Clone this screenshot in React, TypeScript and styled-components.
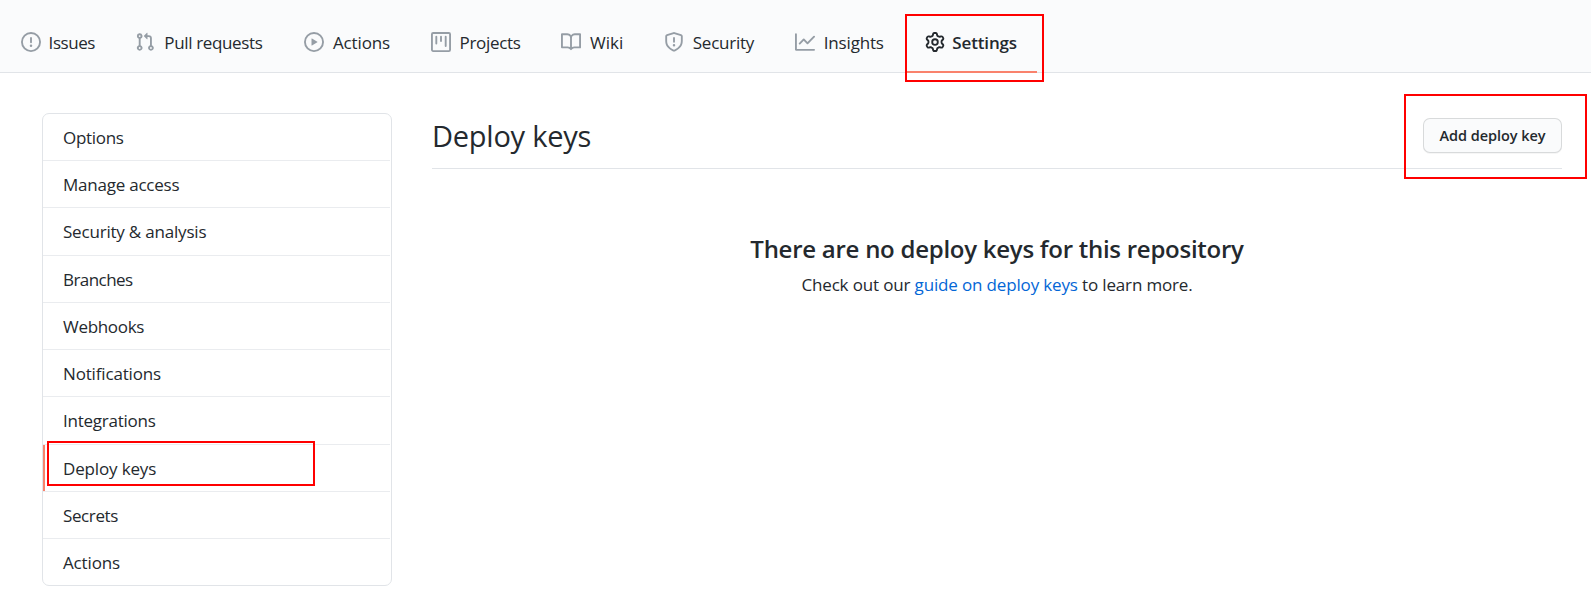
import React from 'react';
import styled, { createGlobalStyle, css } from 'styled-components';

const GlobalStyle = createGlobalStyle`
  *, *::before, *::after { box-sizing: border-box; }
  body {
    margin: 0;
    background: #fff;
    color: #24292e;
    font-family: "Open Sans", "Noto Sans", sans-serif;
    font-size: 17px;
    line-height: 25px;
  }
`;

const Page = styled.div`
  height: 594px;
  overflow: hidden;
`;

const RepoNav = styled.nav`
  display: flex;
  height: 73px;
  padding-left: 1px;
  background: #fafbfc;
  border-bottom: 1px solid #e1e4e8;
`;

const Tab = styled.a<{ $width: number; $selected?: boolean }>`
  position: relative;
  display: flex;
  flex: none;
  align-items: flex-start;
  width: ${p => p.$width}px;
  height: 73px;
  padding: 30px 0 0 20px;
  white-space: nowrap;
  border-bottom: 2px solid transparent;
  ${p => p.$selected && css`
    font-weight: 600;
    border-bottom-color: #f9826c;
  `}
`;

const TabIcon = styled.svg<{ $selected?: boolean }>`
  flex: none;
  width: 20px;
  height: 20px;
  margin-top: 2px;
  fill: ${p => (p.$selected ? '#24292e' : '#959da5')};
`;

const Label = styled.span<{ $tracking?: number; $gap?: number }>`
  margin-left: ${p => p.$gap ?? 0}px;
  letter-spacing: ${p => p.$tracking ?? 0}px;
`;

const Highlight = styled.span<{ $x: number; $y: number; $w: number; $h: number }>`
  position: absolute;
  left: ${p => p.$x}px;
  top: ${p => p.$y}px;
  width: ${p => p.$w}px;
  height: ${p => p.$h}px;
  border: 2px solid #f00;
  pointer-events: none;
  z-index: 1;
`;

const Content = styled.div`
  display: flex;
  align-items: flex-start;
  gap: 40px;
  padding: 40px 29px 0 42px;
`;

const Menu = styled.nav`
  flex: none;
  width: 350px;
  border: 1px solid #e1e4e8;
  border-radius: 7px;
`;

const MenuItem = styled.a<{ $height: number; $selected?: boolean }>`
  position: relative;
  display: block;
  height: ${p => p.$height}px;
  margin-right: 1px;
  padding: 11px 20px 0;
  border-bottom: 1px solid #eaecef;
  &:last-of-type { border-bottom: 0; }
  ${p => p.$selected && css`
    &::before {
      content: '';
      position: absolute;
      inset: 0 auto 0 0;
      width: 2px;
      background: #f9826c;
    }
  `}
`;

const Main = styled.main`
  flex: 1;
  min-width: 0;
`;

const Subhead = styled.header`
  position: relative;
  display: flex;
  justify-content: space-between;
  align-items: flex-start;
  height: 56px;
  border-bottom: 1px solid #e1e4e8;
`;

const Title = styled.h2`
  margin: 2px 0 0;
  font-size: 29px;
  font-weight: 400;
  line-height: 42px;
`;

const Button = styled.button`
  width: 139px;
  height: 35px;
  margin-top: 5px;
  padding: 0;
  color: #24292e;
  background: #fafbfc;
  border: 1px solid rgba(27, 31, 35, 0.15);
  border-radius: 7px;
  box-shadow: 0 1px 0 rgba(27, 31, 35, 0.04);
  font: 600 14.5px/20px "Open Sans", sans-serif;
  white-space: nowrap;
`;

const Blankslate = styled.section`
  padding-top: 61px;
  text-align: center;
`;

const BlankTitle = styled.h3`
  margin: 0;
  font-size: 24px;
  font-weight: 600;
  line-height: 37px;
`;

const BlankText = styled.p`
  margin: 5px 0 0;
`;

const Link = styled.a`
  color: #0366d6;
`;

interface TabData {
  label: string;
  width: number;
  gap: number;
  tracking: number;
  selected?: boolean;
  path: string;
}

const tabs: TabData[] = [
  { label: 'Issues', width: 114, gap: 7.6, tracking: -0.45, path: 'M8 1.5a6.5 6.5 0 100 13 6.5 6.5 0 000-13zM0 8a8 8 0 1116 0A8 8 0 010 8zm9 3a1 1 0 11-2 0 1 1 0 012 0zm-.25-6.25a.75.75 0 00-1.5 0v3.5a.75.75 0 001.5 0v-3.5z' },
  { label: 'Pull requests', width: 169, gap: 9.3, tracking: -0.35, path: 'M7.177 3.073L9.573.677A.25.25 0 0110 .854v4.792a.25.25 0 01-.427.177L7.177 3.427a.25.25 0 010-.354zM3.75 2.5a.75.75 0 100 1.5.75.75 0 000-1.5zm-2.25.75a2.25 2.25 0 113 2.122v5.256a2.251 2.251 0 11-1.5 0V5.372A2.25 2.25 0 011.5 3.25zM11 2.5h-1V4h1a1 1 0 011 1v5.628a2.251 2.251 0 101.5 0V5A2.5 2.5 0 0011 2.5zm1 10.25a.75.75 0 111.5 0 .75.75 0 01-1.5 0zM3.75 12a.75.75 0 100 1.5.75.75 0 000-1.5z' },
  { label: 'Actions', width: 127, gap: 9, tracking: -0.15, path: 'M1.5 8a6.5 6.5 0 1113 0 6.5 6.5 0 01-13 0zM8 0a8 8 0 100 16A8 8 0 008 0zM6.379 5.227A.25.25 0 006 5.442v5.117a.25.25 0 00.379.214l4.264-2.559a.25.25 0 000-.428L6.379 5.227z' },
  { label: 'Projects', width: 130, gap: 8.5, tracking: -0.32, path: 'M1.75 0A1.75 1.75 0 000 1.75v12.5C0 15.216.784 16 1.75 16h12.5A1.75 1.75 0 0016 14.25V1.75A1.75 1.75 0 0014.25 0H1.75zM1.5 1.75a.25.25 0 01.25-.25h12.5a.25.25 0 01.25.25v12.5a.25.25 0 01-.25.25H1.75a.25.25 0 01-.25-.25V1.75zM11.75 3a.75.75 0 00-.75.75v7.5a.75.75 0 001.5 0v-7.5a.75.75 0 00-.75-.75zm-8.25.75a.75.75 0 011.5 0v5.5a.75.75 0 01-1.5 0v-5.5zM8 3a.75.75 0 00-.75.75v3.5a.75.75 0 001.5 0v-3.5A.75.75 0 008 3z' },
  { label: 'Wiki', width: 103, gap: 9, tracking: 0, path: 'M0 1.75A.75.75 0 01.75 1h4.253c1.227 0 2.317.59 3 1.501A3.744 3.744 0 0111.006 1h4.245a.75.75 0 01.75.75v10.5a.75.75 0 01-.75.75h-4.507a2.25 2.25 0 00-1.591.659l-.622.621a.75.75 0 01-1.06 0l-.622-.621A2.25 2.25 0 005.258 13H.75a.75.75 0 01-.75-.75V1.75zm8.755 3a2.25 2.25 0 012.25-2.25H14.5v9h-3.757c-.71 0-1.4.201-1.992.572l.004-7.322zm-1.504 7.324l.004-5.073-.002-2.253A2.25 2.25 0 005.003 2.5H1.5v9h3.757a3.75 3.75 0 011.994.574z' },
  { label: 'Security', width: 131, gap: 8.8, tracking: -0.25, path: 'M7.467.133a1.75 1.75 0 011.066 0l5.25 1.68A1.75 1.75 0 0115 3.48V7c0 1.566-.32 3.182-1.303 4.682-.983 1.498-2.585 2.813-5.032 3.855a1.7 1.7 0 01-1.33 0c-2.447-1.042-4.049-2.357-5.032-3.855C1.32 10.182 1 8.566 1 7V3.48a1.75 1.75 0 011.217-1.667l5.25-1.68zm.61 1.429a.25.25 0 00-.153 0l-5.25 1.68a.25.25 0 00-.174.238V7c0 1.358.275 2.666 1.057 3.86.784 1.194 2.121 2.34 4.366 3.297a.2.2 0 00.154 0c2.245-.956 3.582-2.104 4.366-3.298C13.225 9.666 13.5 8.36 13.5 7V3.48a.25.25 0 00-.174-.237l-5.25-1.68zM9 10.5a1 1 0 11-2 0 1 1 0 012 0zm-.25-5.75a.75.75 0 10-1.5 0v3a.75.75 0 001.5 0v-3z' },
  { label: 'Insights', width: 130, gap: 8.8, tracking: -0.18, path: 'M1.5 1.75a.75.75 0 00-1.5 0v12.5c0 .414.336.75.75.75h14.5a.75.75 0 000-1.5H1.5V1.75zm14.28 2.53a.75.75 0 00-1.06-1.06L10 7.94 7.53 5.47a.75.75 0 00-1.06 0L3.22 8.72a.75.75 0 001.06 1.06L7 7.06l2.47 2.47a.75.75 0 001.06 0l5.25-5.25z' },
  { label: 'Settings', width: 132, gap: 7.3, tracking: -0.15, selected: true, path: 'M7.429 1.525a6.593 6.593 0 011.142 0c.036.003.108.036.137.146l.289 1.105c.147.56.55.967.997 1.189.174.086.341.183.501.29.417.278.97.423 1.53.27l1.102-.303c.11-.03.175.016.195.046.219.31.41.641.573.989.014.031.022.11-.059.19l-.815.806c-.411.406-.562.957-.53 1.456a4.588 4.588 0 010 .582c-.032.499.119 1.05.53 1.456l.815.806c.08.08.073.159.059.19a6.494 6.494 0 01-.573.99c-.02.029-.086.074-.195.045l-1.103-.303c-.559-.153-1.112-.008-1.529.27-.16.107-.327.204-.5.29-.449.222-.851.628-.998 1.189l-.289 1.105c-.029.11-.101.143-.137.146a6.613 6.613 0 01-1.142 0c-.036-.003-.108-.037-.137-.146l-.289-1.105c-.147-.56-.55-.967-.997-1.189a4.502 4.502 0 01-.501-.29c-.417-.278-.97-.423-1.53-.27l-1.102.303c-.11.03-.175-.016-.195-.046a6.492 6.492 0 01-.573-.989c-.014-.031-.022-.11.059-.19l.815-.806c.411-.406.562-.957.53-1.456a4.587 4.587 0 010-.582c.032-.499-.119-1.05-.53-1.456l-.815-.806c-.08-.08-.073-.159-.059-.19a6.44 6.44 0 01.573-.99c.02-.029.086-.075.195-.045l1.103.303c.559.153 1.112.008 1.529-.27.16-.107.327-.204.5-.29.449-.222.851-.628.998-1.189l.289-1.105c.029-.11.101-.143.137-.146zM8 0c-.236 0-.47.01-.701.03-.743.065-1.29.615-1.458 1.261l-.29 1.106c-.017.066-.078.158-.211.224a5.994 5.994 0 00-.668.386c-.123.082-.233.09-.3.071L3.27 2.776c-.644-.177-1.392.02-1.82.63a7.977 7.977 0 00-.704 1.217c-.315.675-.111 1.422.363 1.891l.815.806c.05.048.098.147.088.294a6.084 6.084 0 000 .772c.01.147-.038.246-.088.294l-.815.806c-.474.469-.678 1.216-.363 1.891.2.428.436.835.704 1.218.428.609 1.176.806 1.82.63l1.103-.303c.066-.019.176-.011.299.071.213.143.436.272.668.386.133.066.194.158.212.224l.289 1.106c.169.646.715 1.196 1.458 1.26a8.094 8.094 0 001.402 0c.743-.064 1.29-.614 1.458-1.26l.29-1.106c.017-.066.078-.158.211-.224a5.98 5.98 0 00.668-.386c.123-.082.233-.09.3-.071l1.102.302c.644.177 1.392-.02 1.82-.63.268-.382.505-.789.704-1.217.315-.675.111-1.422-.364-1.891l-.814-.806c-.05-.048-.098-.147-.088-.294a6.1 6.1 0 000-.772c-.01-.147.039-.246.088-.294l.814-.806c.475-.469.679-1.216.364-1.891a7.992 7.992 0 00-.704-1.218c-.428-.609-1.176-.806-1.82-.63l-1.103.303c-.066.019-.176.011-.299-.071a5.991 5.991 0 00-.668-.386c-.133-.066-.194-.158-.212-.224L10.16 1.29C9.99.645 9.444.095 8.701.031A8.094 8.094 0 008 0zm1.5 8a1.5 1.5 0 11-3 0 1.5 1.5 0 013 0zM11 8a3 3 0 11-6 0 3 3 0 016 0z' },
];

interface MenuData {
  label: string;
  height: number;
  tracking: number;
  selected?: boolean;
}

const menu: MenuData[] = [
  { label: 'Options', height: 47, tracking: -0.3 },
  { label: 'Manage access', height: 47, tracking: -0.23 },
  { label: 'Security & analysis', height: 48, tracking: -0.2 },
  { label: 'Branches', height: 47, tracking: -0.55 },
  { label: 'Webhooks', height: 47, tracking: -0.3 },
  { label: 'Notifications', height: 47, tracking: -0.16 },
  { label: 'Integrations', height: 48, tracking: -0.24 },
  { label: 'Deploy keys', height: 47, tracking: -0.15, selected: true },
  { label: 'Secrets', height: 47, tracking: -0.38 },
  { label: 'Actions', height: 46, tracking: -0.15 },
];

export default function App() {
  return (
    <Page>
      <GlobalStyle />
      <RepoNav>
        {tabs.map(t => (
          <Tab key={t.label} $width={t.width} $selected={t.selected}>
            <TabIcon viewBox="0 0 16 16" $selected={t.selected}>
              <path fillRule="evenodd" d={t.path} />
            </TabIcon>
            <Label $gap={t.gap} $tracking={t.tracking}>{t.label}</Label>
            {t.selected && <Highlight $x={0} $y={14} $w={139} $h={68} />}
          </Tab>
        ))}
      </RepoNav>
      <Content>
        <Menu>
          {menu.map(m => (
            <MenuItem key={m.label} $height={m.height} $selected={m.selected}>
              <Label $tracking={m.tracking}>{m.label}</Label>
              {m.selected && <Highlight $x={4} $y={-4} $w={268} $h={45} />}
            </MenuItem>
          ))}
        </Menu>
        <Main>
          <Subhead>
            <Title><Label $tracking={-0.25}>Deploy keys</Label></Title>
            <Button><Label $tracking={-0.05}>Add deploy key</Label></Button>
            <Highlight $x={972} $y={-19} $w={183} $h={85} />
          </Subhead>
          <Blankslate>
            <BlankTitle><Label $tracking={-0.26}>There are no deploy keys for this repository</Label></BlankTitle>
            <BlankText>
              <Label $tracking={-0.155}>Check out our <Link>guide on deploy keys</Link> to learn more.</Label>
            </BlankText>
          </Blankslate>
        </Main>
      </Content>
    </Page>
  );
}
